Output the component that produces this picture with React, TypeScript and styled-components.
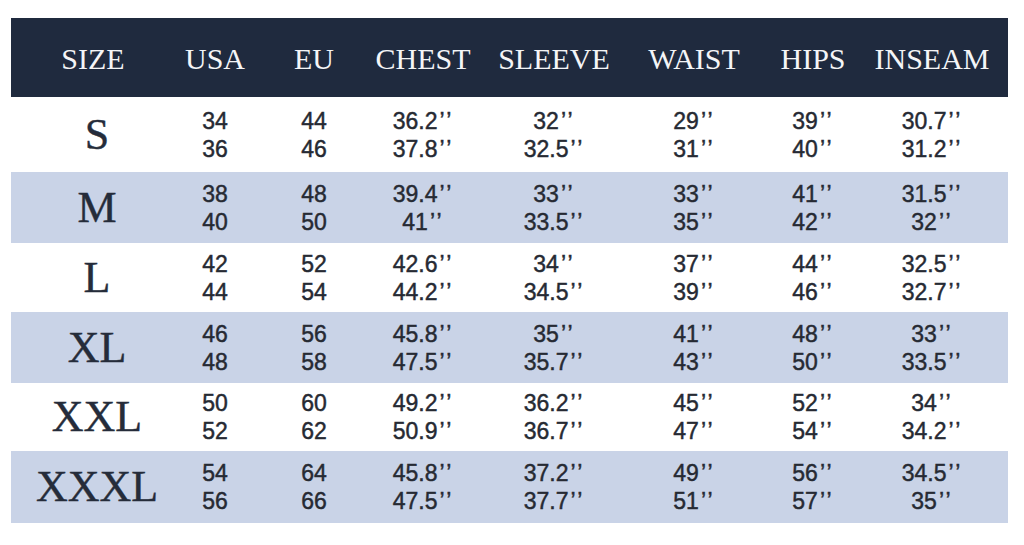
import styled, { createGlobalStyle } from "styled-components";

const GlobalStyle = createGlobalStyle`
  html, body {
    margin: 0;
    padding: 0;
    background: #ffffff;
  }
`;

const COLUMNS = "164px 80px 118px 100px 162px 118px 120px 118px";

const Page = styled.div`
  width: 1024px;
  height: 545px;
  padding: 18px 0 0 11px;
  box-sizing: border-box;
  background: #ffffff;
`;

const Table = styled.div`
  width: 997px;
  display: flex;
  flex-direction: column;
`;

const HeaderRow = styled.div`
  display: grid;
  grid-template-columns: ${COLUMNS};
  align-items: center;
  height: 79px;
  padding-right: 17px;
  background: #1f2a3e;
`;

const HeaderCell = styled.div`
  text-align: center;
  color: #f4f5f7;
  font-family: "Liberation Serif", "Times New Roman", serif;
  font-size: 30px;
  line-height: 1;
  padding-top: 2px;
  white-space: nowrap;
`;

const Row = styled.div<{ $shaded: boolean; $height: number }>`
  display: grid;
  grid-template-columns: ${COLUMNS};
  align-items: center;
  height: ${(p) => p.$height}px;
  padding-right: 17px;
  background: ${(p) => (p.$shaded ? "#c9d3e7" : "#ffffff")};
`;

const SizeCell = styled.div`
  text-align: center;
  color: #252c3a;
  font-family: "Liberation Serif", "Times New Roman", serif;
  font-size: 44px;
  line-height: 1;
  padding-left: 8px;
  white-space: nowrap;
  -webkit-text-stroke: 0.4px #252c3a;
`;

const ValueCell = styled.div`
  display: flex;
  flex-direction: column;
  align-items: center;
  color: #262a33;
  font-family: "Liberation Sans", Arial, sans-serif;
  font-size: 23px;
  line-height: 28px;
  white-space: nowrap;
  -webkit-text-stroke: 0.45px #262a33;
`;

const Quote = styled.span`
  margin-left: 2px;
  letter-spacing: 2px;
`;

const headers = ["SIZE", "USA", "EU", "CHEST", "SLEEVE", "WAIST", "HIPS", "INSEAM"];

type SizeRow = { size: string; height: number; values: [string, string][] };

// values ending in " get the doubled closing quote mark
const rows: SizeRow[] = [
  {
    size: "S",
    height: 75,
    values: [["34", "36"], ["44", "46"], ['36.2"', '37.8"'], ['32"', '32.5"'], ['29"', '31"'], ['39"', '40"'], ['30.7"', '31.2"']],
  },
  {
    size: "M",
    height: 71,
    values: [["38", "40"], ["48", "50"], ['39.4"', '41"'], ['33"', '33.5"'], ['33"', '35"'], ['41"', '42"'], ['31.5"', '32"']],
  },
  {
    size: "L",
    height: 69,
    values: [["42", "44"], ["52", "54"], ['42.6"', '44.2"'], ['34"', '34.5"'], ['37"', '39"'], ['44"', '46"'], ['32.5"', '32.7"']],
  },
  {
    size: "XL",
    height: 71,
    values: [["46", "48"], ["56", "58"], ['45.8"', '47.5"'], ['35"', '35.7"'], ['41"', '43"'], ['48"', '50"'], ['33"', '33.5"']],
  },
  {
    size: "XXL",
    height: 68,
    values: [["50", "52"], ["60", "62"], ['49.2"', '50.9"'], ['36.2"', '36.7"'], ['45"', '47"'], ['52"', '54"'], ['34"', '34.2"']],
  },
  {
    size: "XXXL",
    height: 72,
    values: [["54", "56"], ["64", "66"], ['45.8"', '47.5"'], ['37.2"', '37.7"'], ['49"', '51"'], ['56"', '57"'], ['34.5"', '35"']],
  },
];

function Measure({ value }: { value: string }) {
  if (!value.endsWith('"')) return <span>{value}</span>;
  return (
    <span>
      {value.slice(0, -1)}
      <Quote>{"\u2019\u2019"}</Quote>
    </span>
  );
}

export default function App() {
  return (
    <>
      <GlobalStyle />
      <Page>
        <Table>
          <HeaderRow>
            {headers.map((h) => (
              <HeaderCell key={h}>{h}</HeaderCell>
            ))}
          </HeaderRow>
          {rows.map((row, i) => (
            <Row key={row.size} $shaded={i % 2 === 1} $height={row.height}>
              <SizeCell>{row.size}</SizeCell>
              {row.values.map(([a, b], j) => (
                <ValueCell key={j}>
                  <Measure value={a} />
                  <Measure value={b} />
                </ValueCell>
              ))}
            </Row>
          ))}
        </Table>
      </Page>
    </>
  );
}
